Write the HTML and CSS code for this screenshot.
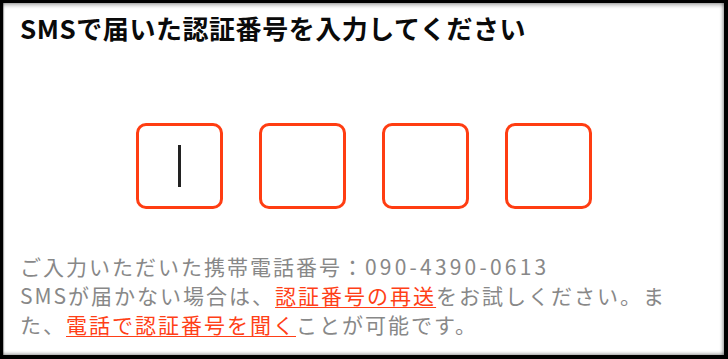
FILE: index.html
```html
<!DOCTYPE html>
<html lang="ja">
<head>
<meta charset="utf-8">
<link rel="stylesheet" href="styles.css">
</head>
<body>
<div class="panel">
  <h1 class="title">SMSで届いた認証番号を入力してください</h1>
  <div class="codes">
    <div class="code-box"><span class="cursor"></span></div>
    <div class="code-box"></div>
    <div class="code-box"></div>
    <div class="code-box"></div>
  </div>
  <p class="note">ご入力いただいた携帯電話番号：<span class="phone">090-4390-0613</span><br>SMSが届かない場合は、<a class="link" href="#">認証番号の再送</a>をお試しください。ま<br>た、<a class="link" href="#">電話で認証番号を聞く</a>ことが可能です。</p>
</div>
</body>
</html>
```

FILE: styles.css
```css
html, body {
  margin: 0;
  padding: 0;
  background: #000;
}
body {
  width: 728px;
  height: 359px;
  box-sizing: border-box;
  padding: 3px 4px 4px 3px;
  font-family: "Noto Sans CJK JP", "Noto Sans", sans-serif;
}
.panel {
  height: 100%;
  background: #fff;
  box-shadow: inset 0 4px 4px -2px rgba(0,0,0,0.35), inset -3px 0 3px -1px rgba(0,0,0,0.25), inset 0 -3px 3px -1px rgba(0,0,0,0.25), inset 1px 0 1px rgba(0,0,0,0.3);
  display: flex;
  flex-direction: column;
  padding: 8px 0 0 17px;
  box-sizing: border-box;
}
.title {
  margin: 0;
  font-size: 26px;
  font-weight: 700;
  line-height: 34px;
  color: #0a0a0a;
  letter-spacing: 0.55px;
}
.codes {
  display: flex;
  justify-content: center;
  gap: 36px;
  margin: 78px 17px 0 0;
}
.code-box {
  width: 87px;
  height: 86px;
  box-sizing: border-box;
  border: 3px solid #ff3d12;
  border-radius: 10px;
  display: flex;
  align-items: center;
  justify-content: center;
}
.cursor {
  width: 3px;
  height: 42px;
  background: #222;
}
.note {
  margin: 43px 0 0 0;
  font-size: 21px;
  line-height: 29px;
  letter-spacing: 2px;
  color: #888;
}
.phone {
  letter-spacing: 3.2px;
}
.link {
  color: #ff3f17;
  text-decoration: underline;
  text-decoration-thickness: 1px;
  text-underline-offset: 3px;
}
```
